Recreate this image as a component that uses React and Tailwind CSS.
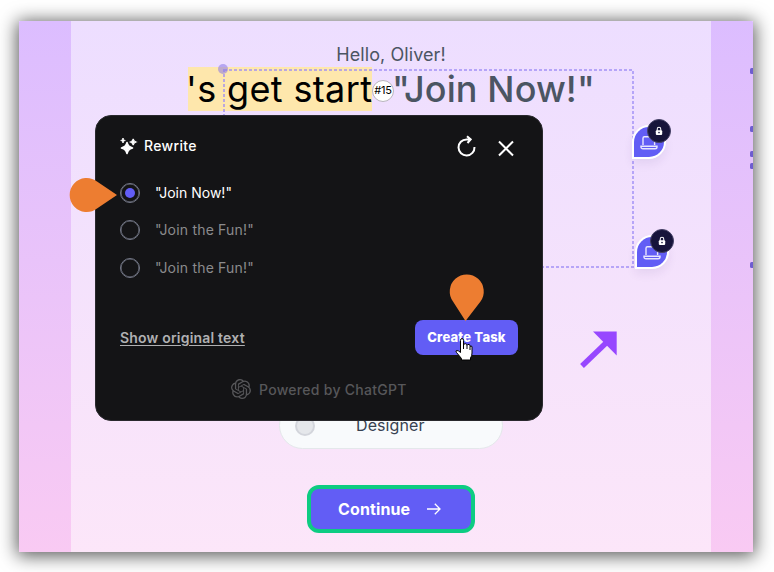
import React from "react";
import { SiOpenai } from "react-icons/si";

const options = ["\"Join Now!\"", "\"Join the Fun!\"", "\"Join the Fun!\""];

function Sparkles() {
  return (
    <svg viewBox="0 0 18 18" className="h-[18px] w-[18px] shrink-0 fill-white">
      <path d="M7 5.500C8 9 9 10 12.500 11C9 12 8 13 7 16.500C6 13 5 12 1.500 11C5 10 6 9 7 5.500Z" stroke="white" strokeWidth="1.6" strokeLinejoin="round" />
      <path d="M13.200 2C13.700 4 14.200 4.500 16 5.100C14.200 5.700 13.700 6.200 13.200 8.200C12.700 6.200 12.200 5.700 10.400 5.100C12.200 4.500 12.700 4 13.200 2Z" stroke="white" strokeWidth="1.1" />
      <path d="M3 1C3.400 2.800 3.800 3.100 5.300 3.500C3.800 3.900 3.400 4.200 3 6C2.600 4.200 2.200 3.900 .7 3.500C2.200 3.100 2.600 2.800 3 1Z" stroke="white" strokeWidth=".9" />
    </svg>
  );
}

function Pin({ className }) {
  return (
    <div className={"absolute h-[30px] w-[30px] rounded-full rounded-bl-none bg-[#625df5] shadow-[0_0_0_2px_white,0_5px_10px_2px_rgba(60,40,120,0.08)] " + className}>
      <svg viewBox="0 0 18 16" className="ml-[6px] mt-2 h-4 w-[18px]" fill="none" stroke="#e8e6ff" strokeWidth="1.4">
        <path d="M3 10V3.2Q3 1.8 4.4 1.8H13.2Q14.6 1.8 14.6 3.2V10M1 11.2H17V12Q17 13.8 15 13.8H3Q1 13.8 1 12Z" />
      </svg>
      <div className="absolute -top-[8px] left-[13px] flex h-6 w-6 items-center justify-center rounded-full border border-[#454166] bg-[#17143b]">
        <svg viewBox="0 0 10 12" className="h-[10px] w-[8px]">
          <path d="M2.8 6V3.6Q2.8 1.2 5 1.2T7.2 3.6V6" fill="none" stroke="white" strokeWidth="1.3" />
          <rect x="1" y="5" width="8" height="6" rx="1.4" fill="white" />
          <circle cx="5" cy="8" r="1" fill="#17143b" />
        </svg>
      </div>
    </div>
  );
}

function RewriteDialog() {
  return (
    <section className="absolute left-[95px] top-[115px] flex h-[306px] w-[448px] flex-col rounded-2xl border border-[#29282d] bg-[#141416] px-6 text-white">
      <header className="mt-[18px] flex h-6 items-center">
        <Sparkles />
        <h2 className="-mt-px ml-[6px] text-[14px] font-medium leading-5 tracking-[0.025em]">Rewrite</h2>
        <svg viewBox="0 0 20 22" className="ml-auto h-[22px] w-5" fill="none" stroke="white" strokeWidth="2">
          <path d="M17.500 12A8 8 0 1 1 9.500 4.400H13.500M10 1.200L13.700 4.400L10.500 8" />
        </svg>
        <svg viewBox="0 0 20 20" className="ml-[19px] mr-[2px] mt-[5px] h-5 w-5" fill="none" stroke="white" strokeWidth="2">
          <path d="M3 2.500L17 16.500M17 2.500L3 16.500" />
        </svg>
      </header>
      <div className="mt-4 flex flex-col">
        {options.map((text, i) => (
          <label key={i} className="flex h-[37.5px] items-center">
            <span className="flex h-5 w-5 items-center justify-center rounded-full border-[1.5px] border-[#747887] shadow-[inset_0_0_0_0.5px_#747887]">
              {i === 0 && <span className="h-[10px] w-[10px] rounded-full bg-[#625df5]" />}
            </span>
            <span className={i === 0 ? "ml-[15px] text-[14px] leading-5" : "ml-[15px] text-[14px] leading-5 tracking-[0.014em] text-[#8b8b8d]"}>{text}</span>
          </label>
        ))}
      </div>
      <div className="mt-[33.5px] flex h-[35px] items-center justify-between">
        <a className="text-[14px] font-semibold tracking-[0.014em] text-[#b0b0b2] underline underline-offset-2">Show original text</a>
        <button className="h-[35px] w-[103px] rounded-lg bg-[#625df5] text-[13px] font-extrabold tracking-[0.014em]">Create Task</button>
      </div>
      <footer className="mt-[24px] flex h-5 items-center pl-[111px] text-[#57575a]">
        <SiOpenai className="h-5 w-5" />
        <span className="ml-2 text-[14px] font-medium tracking-[0.02em]">Powered by ChatGPT</span>
      </footer>
    </section>
  );
}

export default function App() {
  return (
    <div className="relative h-[572px] w-[774px] overflow-hidden bg-white pl-[19px] pt-[21px] font-['Inter','Liberation_Sans',sans-serif]">
      <div className="h-[531px] w-[734px] overflow-hidden rounded-[1px] bg-linear-to-b from-[#dcbdff] to-[#f9caf3] pl-[52px] pr-[42px] shadow-[0_2px_18px_2px_rgba(0,0,0,0.65)]">
        <main className="flex h-full flex-col items-center bg-linear-to-b from-[#eddeff] to-[#fce6f9]">
          <p className="mt-5 h-7 text-[18px] leading-7 tracking-[0.004em] text-[#4b5563]">Hello, Oliver!</p>
          <div className="-mt-[2px] flex h-[44px] items-center self-start pl-[117px]">
            <h1 className="h-[44px] w-[184px] whitespace-nowrap bg-[#fee7ac] -indent-[2px] text-[36px] leading-[44px] tracking-[0.01em] text-black">'s get start</h1>
            <span className="mt-[3px] flex h-[22px] w-[22px] items-center justify-center rounded-full border border-[#b8b5bd] bg-white text-[11px] tracking-tight text-black">#15</span>
            <span className="ml-[-2px] whitespace-nowrap text-[36px] font-medium leading-[44px] tracking-[0.003em] text-[#4b5563]">"Join Now!"</span>
          </div>
          <div className="mt-[291px] flex h-[47px] w-[224px] items-center rounded-full border border-[#e4e8eb] bg-[#f8fafc] px-[15px]">
            <span className="h-5 w-5 rounded-full border-2 border-[#d3d5dc] bg-[#e5e7eb]" />
            <span className="-mt-px ml-[41px] text-base leading-6 tracking-[0.006em] text-[#374151]">Designer</span>
          </div>
          <button className="mt-9 flex h-12 w-[168px] items-center rounded-xl border-4 border-[#0dcc82] bg-[#625df5] pl-[27px] text-base font-bold tracking-[0.008em] text-white">
            Continue
            <svg viewBox="0 0 16 14" className="ml-4 h-[14px] w-4" fill="none" stroke="white" strokeWidth="1.3">
              <path d="M1 7H14M8.8 1.8L14 7L8.8 12.2" />
            </svg>
          </button>
        </main>
      </div>
      <svg className="pointer-events-none absolute left-0 top-0 h-[572px] w-[774px]" fill="none">
        <path d="M224 70H633V267H224Z" stroke="#9d8cf5" strokeOpacity=".7" strokeWidth="2" strokeDasharray="3 2" />
        <circle cx="223" cy="69" r="5" fill="#8876e8" fillOpacity=".55" />
        <path d="M593 331.5H616.700V355.500Z" fill="#9747ff" />
        <path d="M582 366L606 343" stroke="#9747ff" strokeWidth="5.5" />
        <g fill="#6e5dd0">
          {[68, 126, 151, 163, 262].map((y) => <path key={y} d={`M753 ${y}h-1.5q-1.5 0-1.5 1.5v3q0 1.5 1.5 1.5h1.5z`} />)}
        </g>
      </svg>
      <Pin className="left-[634px] top-[127px]" />
      <Pin className="left-[637px] top-[237px]" />
      <RewriteDialog />
      <svg className="pointer-events-none absolute left-0 top-0 h-[572px] w-[774px]">
        <path d="M117 195L97 208.500A17 17 0 1 1 97 181.500Z" fill="#ed7d31" />
        <path d="M465.500 321L453 301.500A17 17 0 1 1 480.500 301.500Z" fill="#ed7d31" />
        <path d="M460.500 340.500Q460.500 338.500 462 338.500T463.500 340.500V345Q464 343.500 465.500 343.700T467 345.500Q467.500 344 469 344.500T470 346.500Q471 345.500 472 346.500V353Q472 356 470.500 358V360H461.500V358.500L456.500 352.500Q455 350.500 457 350.500Q458.500 350.500 460.500 352.500Z" fill="white" stroke="black" strokeWidth="1" />
        <path d="M463.500 344V349M467 345.500V349M470 346.500V350" stroke="black" strokeWidth="1" />
      </svg>
    </div>
  );
}
